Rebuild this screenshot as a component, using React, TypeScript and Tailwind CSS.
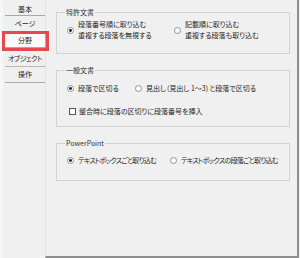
import React from 'react';

const Radio = ({ checked }: { checked?: boolean }) => (
  <svg width="7" height="7" viewBox="0 0 7 7" className="shrink-0">
    <circle cx="3.5" cy="3.5" r="3" fill="#ffffff" stroke="#7a7a7a" strokeWidth="0.8" />
    {checked && <circle cx="3.5" cy="3.5" r="1.4" fill="#1a1a1a" />}
  </svg>
);

const Checkbox = () => (
  <div className="w-[7px] h-[7px] bg-white border border-[#555] shrink-0" />
);

const Group = ({ title, className, children }: { title: string; className?: string; children: React.ReactNode }) => (
  <fieldset className="w-[234px] border border-[#d2d2d2] p-0">
    <legend className="ml-[8px] px-[1px] h-[10px] leading-[10px] text-[#333]">{title}</legend>
    <div className={`pl-[10px] ${className ?? ''}`}>{children}</div>
  </fieldset>
);

export default function App() {
  return (
    <div className="w-[300px] h-[258px] bg-[#f0f0f0] flex overflow-hidden whitespace-nowrap text-[7px] text-[#1e1e1e] font-['Noto_Sans_CJK_JP','Noto_Sans',sans-serif] [font-feature-settings:'palt']">
      <div className="w-[3px] shrink-0 bg-[#f7f7f7]" />

      {/* side tabs */}
      <div className="w-[42px] shrink-0 pt-[3px] pl-[2px] flex flex-col relative z-10">
        <div className="h-[13px] border-b border-[#a8a8a8] flex items-center justify-center">基本</div>
        <div className="h-[16px] border-b border-[#a8a8a8] flex items-center justify-center">ページ</div>
        <div className="relative mt-[1px] h-[15px] -ml-[1px] -mr-[1px] bg-[#fafafa] border border-[#a8a8a8] flex items-center justify-center">
          分野
          <div className="absolute -left-[3px] -top-[3px] -right-[4px] -bottom-[4px] border-[3px] border-[#e5484d]" />
        </div>
        <div className="mt-[2px] h-[17px] border-b border-[#b8b8b8] flex items-center justify-center tracking-[-0.5px]">オブジェクト</div>
        <div className="h-[16px] border-b border-[#a8a8a8] flex items-center justify-center">操作</div>
      </div>

      <div className="w-[254px] shrink-0 border-l border-[#e2e2e2] border-r-2 border-b-2 border-r-[#8e8e8e] border-b-[#8e8e8e] pt-[7px] pl-[10px]">
        <Group title="特許文書" className="pt-[2px] pb-[12px]">
          <div className="flex">
            <div className="w-[107px] flex items-center gap-[4px]">
              <Radio checked />
              <div className="leading-[11px]">
                <div>段落番号順に取り込む</div>
                <div>重複する段落を無視する</div>
              </div>
            </div>
            <div className="flex items-center gap-[4px]">
              <Radio />
              <div className="leading-[11px]">
                <div>記載順に取り込む</div>
                <div>重複する段落も取り込む</div>
              </div>
            </div>
          </div>
        </Group>

        <div className="h-[11px]" />

        <Group title="一般文書" className="pt-[8px] pb-[9px]">
          <div className="flex h-[11px] leading-[11px]">
            <div className="w-[68px] flex items-center gap-[4px]">
              <Radio checked />
              <span>段落で区切る</span>
            </div>
            <div className="flex items-center gap-[4px]">
              <Radio />
              <span>見出し（見出し 1～3）と段落で区切る</span>
            </div>
          </div>
          <div className="mt-[12px] h-[11px] leading-[11px] flex items-center gap-[3px] pl-[2px]">
            <Checkbox />
            <span>整合時に段落の区切りに段落番号を挿入</span>
          </div>
        </Group>

        <div className="h-[11px]" />

        <Group title="PowerPoint" className="pt-[7px] pb-[14px]">
          <div className="flex h-[11px] leading-[11px] tracking-[-0.7px]">
            <div className="w-[103px] flex items-center gap-[4px]">
              <Radio checked />
              <span>テキストボックスごと取り込む</span>
            </div>
            <div className="flex items-center gap-[4px]">
              <Radio />
              <span>テキストボックスの段落ごと取り込む</span>
            </div>
          </div>
        </Group>
      </div>
    </div>
  );
}
